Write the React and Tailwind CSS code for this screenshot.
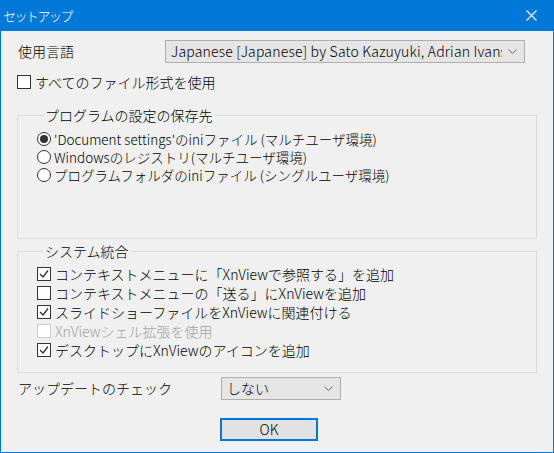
import React from 'react';

const FONT = "font-['Noto_Sans_CJK_JP','Noto_Sans',sans-serif]";

function CheckBox({ checked, disabled, label }) {
  return (
    <div className="flex items-center h-[19px]">
      <span className={`w-[14px] h-[14px] border flex items-center justify-center bg-white ${disabled ? 'border-[#cccccc]' : 'border-[#333333]'}`}>
        {checked && (
          <svg width="10" height="10" viewBox="0 0 10 10">
            <path d="M1 5 L4 8 L9 1.5" fill="none" stroke="#333333" strokeWidth="1.3" />
          </svg>
        )}
      </span>
      <span className={`ml-[4px] leading-[18px] ${disabled ? 'text-[#a0a0a0]' : 'text-black'}`}>{label}</span>
    </div>
  );
}

function Radio({ checked, label }) {
  return (
    <div className="flex items-center h-[18px]">
      <span className="w-[14px] h-[14px] rounded-full border border-[#333333] bg-white flex items-center justify-center">
        {checked && <span className="w-[8px] h-[8px] rounded-full bg-[#333333]" />}
      </span>
      <span className="ml-[3px] leading-[17px] text-[13.5px]">{label}</span>
    </div>
  );
}

function Select({ value, className }) {
  return (
    <div className={`h-[23px] bg-[#e5e5e5] border border-[#adadad] flex items-center justify-between pl-[5px] pr-[7px] overflow-hidden ${className}`}>
      <span className="whitespace-nowrap overflow-hidden">{value}</span>
      <svg width="9" height="5" viewBox="0 0 9 5" className="shrink-0 ml-[6px]">
        <path d="M0.5 0.5 L4.5 4.5 L8.5 0.5" fill="none" stroke="#606060" strokeWidth="1" />
      </svg>
    </div>
  );
}

export default function App() {
  return (
    <div className={`w-[554px] h-[453px] bg-[#0078d7] px-[1px] pb-[1px] flex flex-col text-[14px] leading-[19px] font-light text-black ${FONT}`}>
      <div className="h-[31px] flex items-center justify-between pl-[2px] pr-[16px] text-white">
        <span className="text-[13px] tracking-[-1.5px]">セットアップ</span>
        <svg width="11" height="11" viewBox="0 0 11 11">
          <path d="M0.5 0.5 L10.5 10.5 M10.5 0.5 L0.5 10.5" stroke="#ffffff" strokeWidth="1.1" />
        </svg>
      </div>

      <div className="flex-1 bg-[#f0f0f0] pl-[16px] pr-[15px] pt-[9px] flex flex-col">
        <div className="flex items-center h-[23px]">
          <span className="w-[148px] pl-[1px]">使用言語</span>
          <Select value="Japanese [Japanese] by Sato Kazuyuki, Adrian Ivans" className="w-[360px] text-[14px] tracking-[0.2px]" />
        </div>

        <div className="mt-[9px]">
          <CheckBox label="すべてのファイル形式を使用" />
        </div>

        <fieldset className="mt-[15px] h-[133px] border border-[#dcdcdc] pl-[19px] pt-[5px] ml-0 mr-[1px]">
          <legend className="ml-[6px] px-[2px]">プログラムの設定の保存先</legend>
          <Radio checked label="'Document settings'のiniファイル (マルチユーザ環境)" />
          <Radio label="Windowsのレジストリ(マルチユーザ環境)" />
          <Radio label="プログラムフォルダのiniファイル (シングルユーザ環境)" />
        </fieldset>

        <fieldset className="mt-[3px] h-[131px] border border-[#dcdcdc] pl-[19px] pt-[3px] mr-[1px]">
          <legend className="ml-[6px] px-[2px]">システム統合</legend>
          <CheckBox checked label="コンテキストメニューに「XnViewで参照する」を追加" />
          <CheckBox label="コンテキストメニューの「送る」にXnViewを追加" />
          <CheckBox checked label="スライドショーファイルをXnViewに関連付ける" />
          <CheckBox disabled label="XnViewシェル拡張を使用" />
          <CheckBox checked label="デスクトップにXnViewのアイコンを追加" />
        </fieldset>

        <div className="flex items-center h-[23px] mt-[4px]">
          <span className="w-[204px] pl-[1px]">アップデートのチェック</span>
          <Select value="しない" className="w-[120px]" />
        </div>

        <div className="flex justify-center mt-[18px] pr-[17px]">
          <button className="w-[98px] h-[23px] border-2 border-[#0078d7] bg-[#e1e1e1] text-[14px] leading-[19px]">OK</button>
        </div>
      </div>
    </div>
  );
}
